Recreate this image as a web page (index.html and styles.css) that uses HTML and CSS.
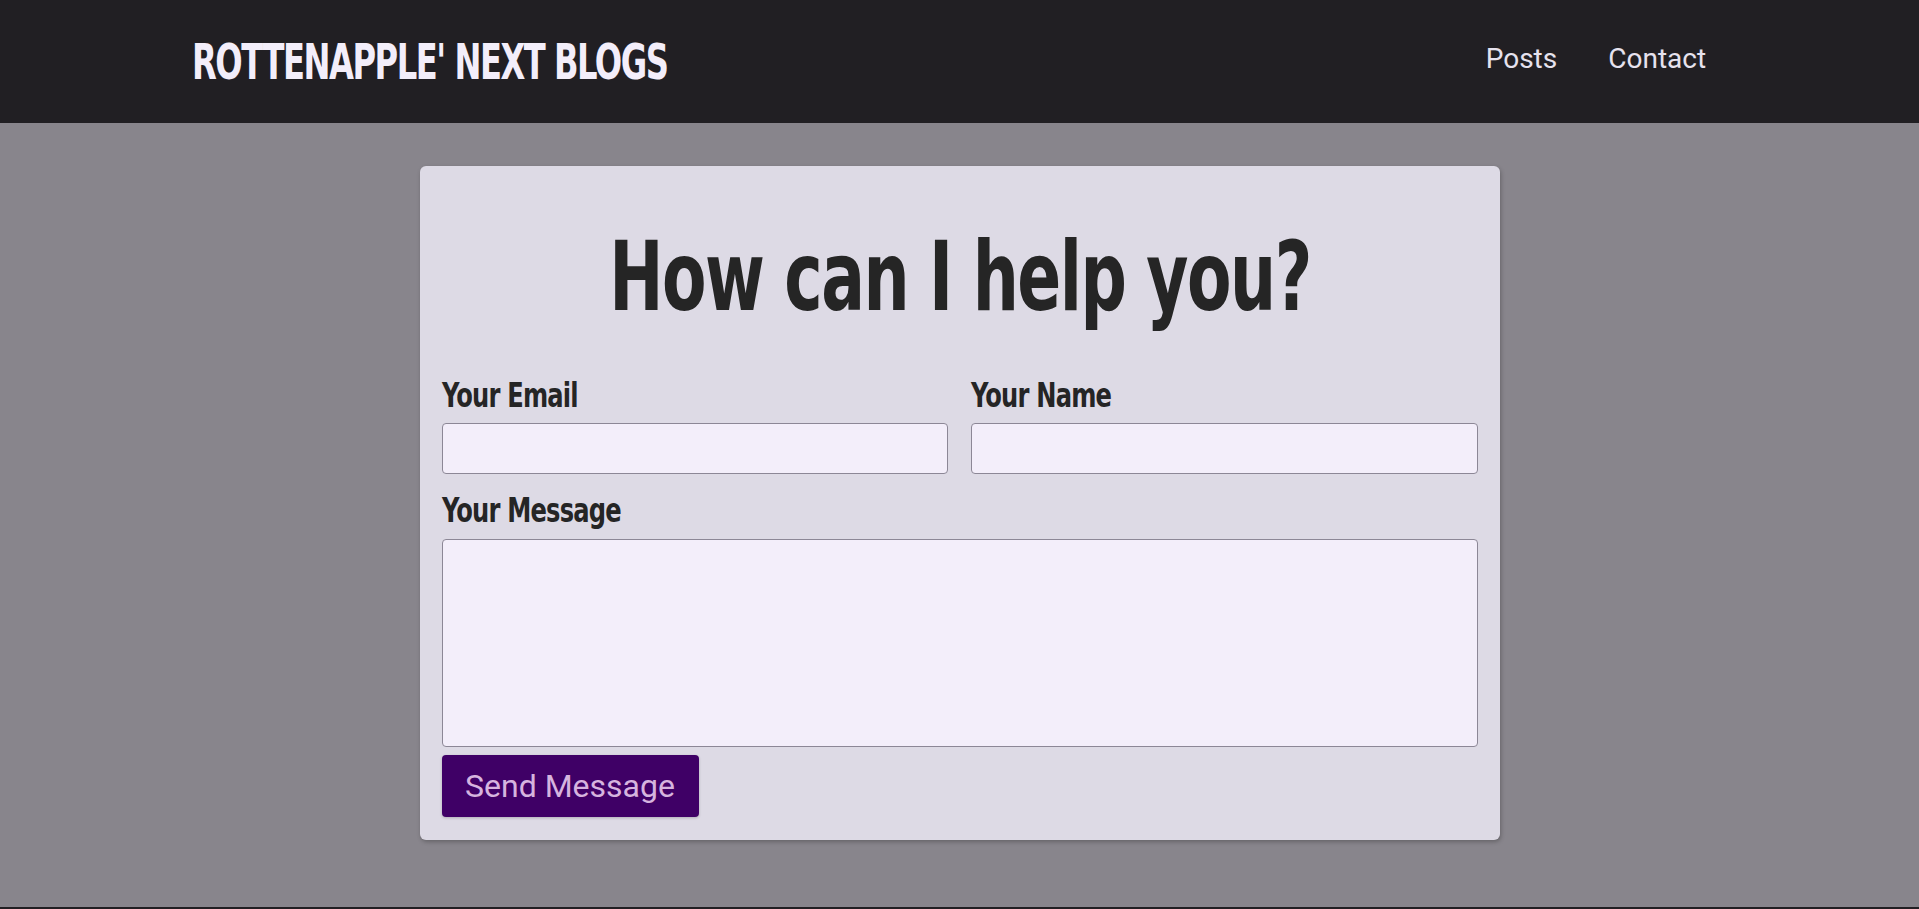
FILE: index.html
```html
<!DOCTYPE html>
<html lang="en">
<head>
<meta charset="utf-8">
<title>Contact</title>
<link rel="stylesheet" href="styles.css">
</head>
<body>
<header class="site-header">
  <div class="container header-inner">
    <a class="logo" href="#">ROTTENAPPLE' NEXT BLOGS</a>
    <nav class="nav">
      <a href="#">Posts</a>
      <a href="#">Contact</a>
    </nav>
  </div>
</header>
<main class="main">
  <section class="card">
    <h1 class="title">How can I help you?</h1>
    <form class="form">
      <div class="row">
        <div class="field">
          <label for="email">Your Email</label>
          <input id="email" type="email">
        </div>
        <div class="field">
          <label for="name">Your Name</label>
          <input id="name" type="text">
        </div>
      </div>
      <div class="field field-message">
        <label for="message">Your Message</label>
        <textarea id="message"></textarea>
      </div>
      <button class="send" type="button">Send Message</button>
    </form>
  </section>
</main>
<footer class="site-footer"></footer>
</body>
</html>
```
FILE: styles.css
```css
* { box-sizing: border-box; }
html, body { margin: 0; padding: 0; }
body {
  background: #88858c;
  font-family: Roboto, "Liberation Sans", sans-serif;
}
.site-header {
  background: #211f23;
  height: 123px;
}
.container {
  width: 80%;
  margin: 0 auto;
}
.header-inner {
  height: 100%;
  display: flex;
  align-items: center;
  justify-content: space-between;
}
.logo {
  font-family: "DejaVu Sans Condensed", "Liberation Sans", sans-serif;
  font-weight: 700;
  font-size: 49px;
  letter-spacing: -2px;
  color: #f3eefa;
  text-decoration: none;
  line-height: 1;
  margin-top: 2px;
  transform: scaleX(0.73);
  transform-origin: left center;
  white-space: nowrap;
}
.nav {
  display: flex;
  gap: 51px;
  padding-right: 21px;
  margin-top: -7px;
}
.nav a {
  color: #e6e2ee;
  text-decoration: none;
  font-size: 28px;
  font-family: Roboto, sans-serif;
}
.main {
  min-height: 784px;
  padding-top: 43px;
}
.card {
  width: 1080px;
  margin: 0 auto;
  background: #dddae5;
  border-radius: 6px;
  padding: 22px 22px 23px;
  box-shadow: 1px 2px 4px rgba(0, 0, 0, 0.25);
}
.title {
  font-family: "DejaVu Sans Condensed", "Liberation Sans", sans-serif;
  font-weight: 700;
  font-size: 96px;
  letter-spacing: -2px;
  line-height: 1;
  color: #252525;
  text-align: center;
  margin: 41px 0 53px;
  transform: scaleX(0.75);
  transform-origin: center;
  white-space: nowrap;
}
.row {
  display: grid;
  grid-template-columns: 1fr 1fr;
  gap: 23px;
}
.field {
  display: flex;
  flex-direction: column;
  gap: 10px;
}
.field label {
  font-family: "DejaVu Sans Condensed", "Liberation Sans", sans-serif;
  font-weight: 700;
  font-size: 34px;
  letter-spacing: -1px;
  line-height: 35px;
  color: #252525;
  transform: scaleX(0.79);
  transform-origin: left center;
  white-space: nowrap;
}
.field input, .field textarea {
  background: #f3eefa;
  border: 1px solid #8c8796;
  border-radius: 4px;
  font-size: 20px;
  font-family: Roboto, sans-serif;
  margin: 0;
}
.field input {
  height: 51px;
}
.field-message {
  margin-top: 19px;
  gap: 11px;
}
.field textarea {
  height: 208px;
  resize: none;
  display: block;
}
.send {
  margin-top: 8px;
  background: #3f0066;
  color: #d6b4df;
  border: none;
  border-radius: 4px;
  font-family: Roboto, sans-serif;
  font-size: 32px;
  height: 62px;
  width: 257px;
  padding: 0;
  box-shadow: 0 1px 3px rgba(0, 0, 0, 0.2);
  display: block;
}
.site-footer {
  background: #211f23;
  height: 60px;
}
```
